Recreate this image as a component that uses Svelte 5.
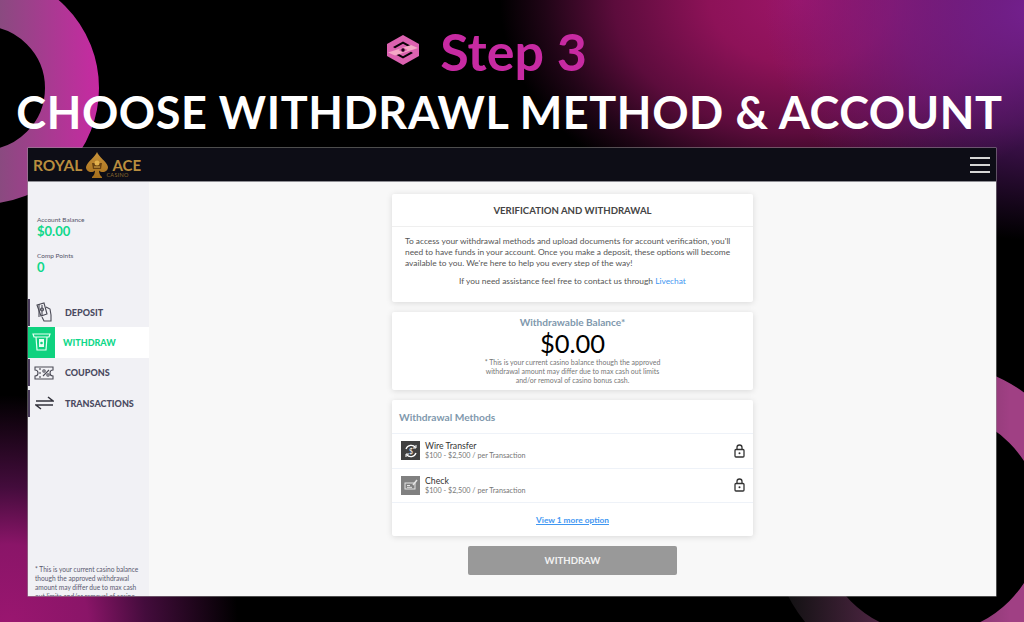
<script>
  const navItems = [
    { label: 'DEPOSIT', icon: 'deposit' },
    { label: 'WITHDRAW', icon: 'withdraw', active: true },
    { label: 'COUPONS', icon: 'coupons' },
    { label: 'TRANSACTIONS', icon: 'transactions' }
  ];
  const methods = [
    { name: 'Wire Transfer', range: '$100 - $2,500 / per Transaction', kind: 'wire' },
    { name: 'Check', range: '$100 - $2,500 / per Transaction', kind: 'check' }
  ];
</script>

<div class="stage">
  <!-- decorative rings behind everything -->
  <svg class="rings" width="1024" height="622" viewBox="0 0 1024 622" aria-hidden="true">
    <defs>
      <linearGradient id="ringA" gradientUnits="userSpaceOnUse" x1="0" y1="0" x2="99" y2="0">
        <stop offset="0" stop-color="#8a4a80" />
        <stop offset="1" stop-color="#c72aa2" />
      </linearGradient>
      <linearGradient id="ringB" gradientUnits="userSpaceOnUse" x1="790" y1="0" x2="1010" y2="0">
        <stop offset="0" stop-color="#141214" />
        <stop offset="1" stop-color="#a04084" />
      </linearGradient>
    </defs>
    <circle cx="-17" cy="88" r="89" fill="none" stroke="url(#ringA)" stroke-width="54" />
    <circle cx="930" cy="522" r="136" fill="none" stroke="url(#ringB)" stroke-width="48" />
  </svg>

  <header class="head">
    <div class="step">
      <svg class="step-icon" width="32" height="30" viewBox="0 0 32 30" aria-hidden="true">
        <path d="M16 0 32 9v12l-16 9-16-9V9z" fill="#dc62b0" />
        <path d="M16 6.500 26 12.100l-2 1.100L16 8.800l-8 4.400-2-1.100z" fill="#0a0208" />
        <path d="M16 23.500 6 17.900l2-1.100 8 4.400 8-4.400 2 1.100z" fill="#0a0208" />
        <path d="M1 17.500 24 10l7 3L8 20.500z" fill="#f4a8c6" />
        <path d="M16 12.400 20.500 15 16 17.600 11.500 15z" fill="#dc62b0" />
        <circle cx="16" cy="15" r="1.700" fill="#1c0816" />
      </svg>
      <span>Step 3</span>
    </div>
    <h1>CHOOSE WITHDRAWL METHOD &amp; ACCOUNT</h1>
  </header>

  <div class="window">
    <div class="topbar">
      <div class="logo">
        <span>ROYAL</span>
        <div class="spade">
          <svg width="22" height="26" viewBox="0 0 22 26" aria-hidden="true">
            <defs>
              <linearGradient id="gold" x1="0" y1="0" x2="0" y2="1">
                <stop offset="0" stop-color="#c8923a" />
                <stop offset="1" stop-color="#a66f1c" />
              </linearGradient>
            </defs>
            <path d="M11 0C12 4 21 10 22 15 22 20 16 21.500 13 18.500 13 21 14 23.500 16 25V26H6V25C8 23.500 9 21 9 18.500 6 21.500 0 20 0 15 1 10 10 4 11 0z" fill="url(#gold)" />
            <path d="M6 11h10l-1 6H7z" fill="#6a4312" />
            <circle cx="11" cy="11" r="2.500" fill="#e2b04c" />
            <path d="M8 15h6" stroke="#e2b04c" stroke-width="1" />
          </svg>
          <small>CASINO</small>
        </div>
        <span>ACE</span>
      </div>
      <div class="burger"><i></i><i></i><i></i></div>
    </div>

    <div class="body">
      <aside class="side">
        <div class="stat first">
          <span class="stat-label">Account Balance</span>
          <strong>$0.00</strong>
        </div>
        <div class="stat">
          <span class="stat-label">Comp Points</span>
          <strong>0</strong>
        </div>

        <nav>
          {#each navItems as item}
            <div class="nav-item" class:active={item.active}>
              <div class="nav-icon">
                {#if item.icon === 'deposit'}
                  <svg width="18" height="20" viewBox="0 0 18 20" fill="none" stroke="#4a4a55" stroke-width="1.100">
                    <path d="M2 3l7-2 3 11-6 2z" />
                    <path d="M4 2v13M7 3v11" />
                    <circle cx="7" cy="7.500" r="1.500" />
                    <path d="M11 5l4 2 1 6v6H9l-2-4" />
                  </svg>
                {:else if item.icon === 'withdraw'}
                  <svg width="19" height="18" viewBox="0 0 19 18" fill="none" stroke="#e8fff4" stroke-width="1.200">
                    <path d="M1 1h17l-1 3H2z" />
                    <path d="M4 4l1 13h9l1-13" />
                    <rect x="7" y="6" width="5" height="8" fill="#e8fff4" stroke="none" />
                    <circle cx="9.500" cy="10" r="1.300" fill="#0fd27f" stroke="none" />
                  </svg>
                {:else if item.icon === 'coupons'}
                  <svg width="20" height="14" viewBox="0 0 20 14" fill="none" stroke="#4a4a55" stroke-width="1.100">
                    <path d="M1 1h18v3a3 3 0 0 0 0 6v3H1v-3a3 3 0 0 0 0-6z" />
                    <path d="M6 2v2M6 6v2M6 10v2" />
                    <path d="M9 10l6-6" />
                    <circle cx="10" cy="5" r="1.200" />
                    <circle cx="14" cy="9" r="1.200" />
                  </svg>
                {:else}
                  <svg width="19" height="14" viewBox="0 0 19 14" fill="none" stroke="#33333c" stroke-width="1.500">
                    <path d="M1 5h17L13 1" />
                    <path d="M18 9H1l5 4" />
                  </svg>
                {/if}
              </div>
              <span>{item.label}</span>
            </div>
          {/each}
        </nav>

        <p class="side-note">* This is your current casino balance though the approved withdrawal amount may differ due to max cash out limits and/or removal of casino bonus cash.</p>
      </aside>

      <main class="main">
        <section class="card intro">
          <h2>VERIFICATION AND WITHDRAWAL</h2>
          <div class="intro-body">
            <p>To access your withdrawal methods and upload documents for account verification, you'll need to have funds in your account. Once you make a deposit, these options will become available to you. We're here to help you every step of the way!</p>
            <p class="assist">If you need assistance feel free to contact us through <a href="#livechat">Livechat</a></p>
          </div>
        </section>

        <section class="card balance">
          <div class="balance-title">Withdrawable Balance*</div>
          <div class="balance-value">$0.00</div>
          <p>* This is your current casino balance though the approved withdrawal amount may differ due to max cash out limits and/or removal of casino bonus cash.</p>
        </section>

        <section class="card methods">
          <div class="methods-title">Withdrawal Methods</div>
          {#each methods as m}
            <div class="method">
              <div class="method-icon {m.kind}">
                {#if m.kind === 'wire'}
                  <svg width="14" height="14" viewBox="0 0 14 14" fill="none" stroke="#fff" stroke-width="1.300">
                    <path d="M2 5a5.500 5.500 0 0 1 9.500-1.500M12 9a5.500 5.500 0 0 1-9.500 1.500" />
                    <path d="M12 1v3H9M2 13v-3h3" stroke-width="1" />
                    <text x="7" y="9.500" font-size="7" fill="#fff" stroke="none" text-anchor="middle" font-family="Lato, sans-serif">$</text>
                  </svg>
                {:else}
                  <svg width="14" height="12" viewBox="0 0 14 12" fill="none" stroke="#e4e4e4" stroke-width="1">
                    <rect x="1" y="4" width="10" height="6" />
                    <path d="M3 6.500h3M3 8.300h5" />
                    <path d="M9 6l4-5" stroke-width="1.500" />
                  </svg>
                {/if}
              </div>
              <div class="method-text">
                <div class="method-name">{m.name}</div>
                <div class="method-range">{m.range}</div>
              </div>
              <svg class="lock" width="11" height="14" viewBox="0 0 11 14" fill="none" stroke="#333" stroke-width="1.300">
                <path d="M3 5.500V3.500a2.500 2.500 0 0 1 5 0v2" />
                <rect x="1" y="5.500" width="9" height="7.500" rx="1" />
                <circle cx="5.500" cy="9.300" r="1" fill="#333" stroke="none" />
              </svg>
            </div>
          {/each}
          <a class="more" href="#more">View 1 more option</a>
        </section>

        <button class="withdraw-btn" type="button">WITHDRAW</button>
      </main>
    </div>
  </div>
</div>

<style>
  :global(body) {
    margin: 0;
    background: #000;
  }
  .stage {
    position: relative;
    width: 1024px;
    height: 622px;
    overflow: hidden;
    font-family: Lato, "Liberation Sans", sans-serif;
    background:
      radial-gradient(circle 230px at 8px 625px, #9a1670 0, #8a1568 35%, rgba(90, 16, 80, 0.75) 60%, rgba(0, 0, 0, 0) 100%),
      radial-gradient(ellipse 270px 230px at 1035px 10px, #74208f 0, rgba(116, 32, 143, 0.6) 50%, rgba(116, 32, 143, 0) 100%),
      radial-gradient(ellipse 300px 215px at 800px 0, #9c1568 0, #8d1258 30%, #5c0c3c 62%, rgba(40, 6, 28, 0.8) 85%, rgba(0, 0, 0, 0) 100%),
      #000;
  }
  .rings {
    position: absolute;
    left: 0;
    top: 0;
  }
  .head {
    position: relative;
    height: 148px;
    display: flex;
    flex-direction: column;
    align-items: center;
  }
  .step {
    display: flex;
    align-items: center;
    gap: 21px;
    height: 87px;
    padding: 14px 50px 0 0;
    box-sizing: border-box;
    color: #c72aa2;
    font-size: 52px;
    font-weight: 700;
  }
  .step-icon {
    margin-top: -2px;
  }
  h1 {
    margin: 0;
    padding-right: 5px;
    color: #fff;
    font-size: 45px;
    line-height: 50px;
    font-weight: 700;
    white-space: nowrap;
    letter-spacing: 0.6px;
  }
  .window {
    position: relative;
    margin-left: 28px;
    width: 968px;
    height: 448px;
    display: flex;
    flex-direction: column;
    background: #f8f8f8;
    box-shadow: 0 0 0 0.5px #999;
  }
  .topbar {
    height: 34px;
    flex: none;
    display: flex;
    align-items: center;
    justify-content: space-between;
    padding: 0 6px 0 5px;
    background: #0d0d16;
    border-bottom: 1px solid #8f8f95;
    box-sizing: border-box;
  }
  .logo {
    display: flex;
    align-items: center;
    gap: 4px;
    color: #b98d3e;
    font-size: 15.500px;
    font-weight: 700;
  }
  .logo span:last-child {
    font-size: 15px;
  }
  .spade {
    position: relative;
    width: 22px;
    height: 26px;
    margin-top: 1px;
  }
  .spade small {
    position: absolute;
    left: 20px;
    top: 20px;
    font-size: 5.500px;
    font-weight: 400;
    color: #8c6a2d;
    letter-spacing: 0.3px;
  }
  .burger {
    display: flex;
    flex-direction: column;
    gap: 5px;
  }
  .burger i {
    display: block;
    width: 20px;
    height: 2px;
    background: #d6d6d6;
  }
  .body {
    flex: 1;
    min-height: 0;
    display: flex;
  }
  .side {
    width: 121px;
    flex: none;
    display: flex;
    flex-direction: column;
    overflow: hidden;
    background: #f1f1f5;
  }
  .stat {
    display: flex;
    flex-direction: column;
    padding-left: 9px;
    margin-bottom: 14px;
  }
  .stat.first {
    padding-top: 34px;
  }
  .stat-label {
    font-size: 6.500px;
    line-height: 8px;
    color: #55556a;
  }
  .stat strong {
    font-size: 13px;
    line-height: 14px;
    font-weight: 700;
    color: #0fd88a;
  }
  nav {
    margin-top: 9px;
  }
  .nav-item {
    height: 30.300px;
    display: flex;
    align-items: center;
    font-size: 9px;
    font-weight: 900;
    color: #4a4a60;
  }
  .nav-item::before {
    content: "";
    flex: none;
    width: 2px;
    height: 27px;
    background: #4a3c5c;
  }
  .nav-icon {
    width: 28px;
    height: 100%;
    margin-right: 7px;
    display: flex;
    align-items: center;
    justify-content: center;
  }
  .nav-item.active {
    background: #fff;
    color: #0fd88a;
  }
  .nav-item.active::before {
    display: none;
  }
  .nav-item.active .nav-icon {
    width: 27px;
    margin-right: 8px;
    background: #0fd27f;
  }
  .side-note {
    margin: auto 0 0;
    padding: 0 8px 0 7px;
    height: 31px;
    flex: none;
    font-size: 6.600px;
    line-height: 9px;
    color: #5a5a70;
  }
  .main {
    flex: 1;
    min-width: 0;
    display: flex;
    flex-direction: column;
    align-items: center;
    gap: 10px;
    padding-top: 12px;
  }
  .card {
    width: 361px;
    background: #fff;
    border-radius: 2px;
    box-shadow: 0 1px 6px rgba(0, 0, 0, 0.13);
    box-sizing: border-box;
  }
  .intro {
    height: 108px;
    color: #555;
  }
  h2 {
    margin: 0;
    height: 33px;
    display: flex;
    align-items: center;
    justify-content: center;
    font-size: 9.600px;
    font-weight: 700;
    color: #444;
    border-bottom: 1px solid #efefef;
    box-sizing: border-box;
  }
  .intro-body {
    padding: 9px 13px 0;
    font-size: 8.400px;
    line-height: 11px;
  }
  .intro-body p {
    margin: 0;
  }
  .intro-body .assist {
    margin-top: 7px;
    text-align: center;
  }
  a {
    color: #3f97f2;
    text-decoration: none;
  }
  .balance {
    height: 78px;
    padding-top: 4px;
    text-align: center;
  }
  .balance-title {
    font-size: 10.100px;
    line-height: 12px;
    font-weight: 700;
    color: #8098ad;
  }
  .balance-value {
    font-size: 25.500px;
    line-height: 30px;
    color: #000;
  }
  .balance p {
    margin: 0 auto;
    width: 190px;
    font-size: 7px;
    line-height: 9px;
    color: #777;
  }
  .methods {
    height: 136px;
    display: flex;
    flex-direction: column;
  }
  .methods-title {
    height: 34px;
    padding-left: 7px;
    display: flex;
    align-items: center;
    font-size: 10.200px;
    font-weight: 700;
    color: #8098ad;
    border-bottom: 1px solid #eef2f8;
    box-sizing: border-box;
  }
  .method {
    height: 34.500px;
    flex: none;
    display: flex;
    align-items: center;
    padding: 0 8px 0 9px;
    border-bottom: 1px solid #eef2f8;
    box-sizing: border-box;
  }
  .method-icon {
    width: 19px;
    height: 19px;
    display: flex;
    align-items: center;
    justify-content: center;
    margin-right: 5px;
  }
  .method-icon.wire {
    background: #404040;
  }
  .method-icon.check {
    background: #808080;
  }
  .method-text {
    flex: 1;
  }
  .method-name {
    font-size: 8.700px;
    line-height: 10px;
    color: #333;
  }
  .method-range {
    font-size: 7.200px;
    line-height: 9px;
    color: #777;
  }
  .more {
    margin: auto;
    font-size: 8.300px;
    font-weight: 700;
    text-decoration: underline;
  }
  .withdraw-btn {
    width: 209px;
    height: 29px;
    border: 0;
    border-radius: 2px;
    background: #999;
    color: #f2f2f2;
    font-family: inherit;
    font-size: 9.600px;
    font-weight: 700;
  }
</style>
